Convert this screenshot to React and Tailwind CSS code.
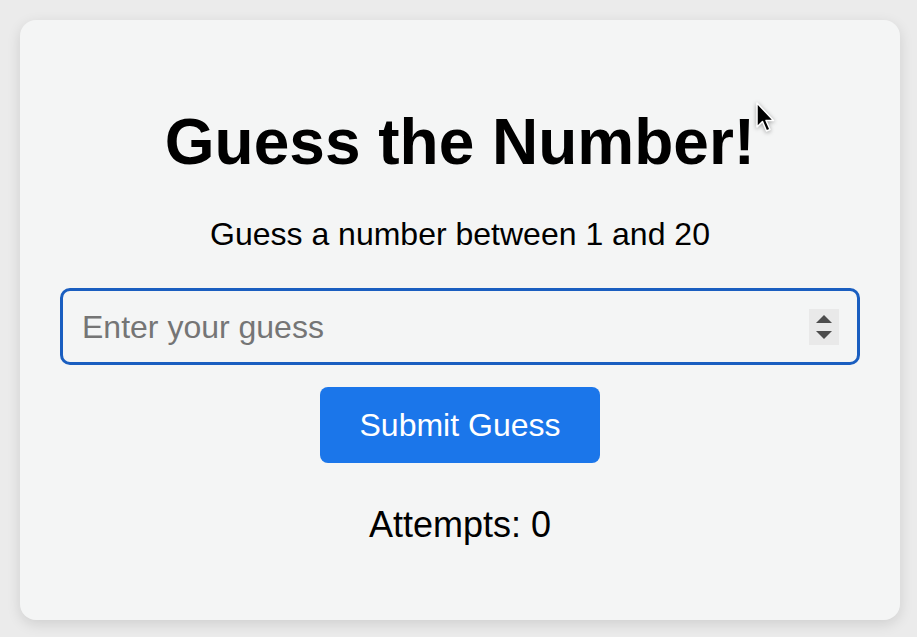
import React, { useState } from 'react';

function Spinner() {
  return (
    <div className="w-[30px] h-[36px] bg-[#e9e9e9] flex flex-col items-center justify-center gap-[8px]">
      <div className="w-0 h-0 border-l-[8px] border-r-[8px] border-b-[8px] border-l-transparent border-r-transparent border-b-[#4d4d4d]" />
      <div className="w-0 h-0 border-l-[8px] border-r-[8px] border-t-[8px] border-l-transparent border-r-transparent border-t-[#4d4d4d]" />
    </div>
  );
}

function Cursor() {
  return (
    <svg
      className="absolute left-[755px] top-[101px] drop-shadow-[0_1px_2px_rgba(0,0,0,0.35)]"
      width="22"
      height="34"
      viewBox="0 0 22 34"
    >
      <path
        d="M2 2 L2 26 L7.5 20.5 L11.5 30 L15 28.5 L11 19.5 L18.5 19.5 Z"
        fill="#000"
        stroke="#fff"
        strokeWidth="1.5"
        strokeLinejoin="round"
      />
    </svg>
  );
}

export default function App() {
  const [guess, setGuess] = useState('');
  const [attempts, setAttempts] = useState(0);

  return (
    <div className="relative min-h-screen bg-[#ebebeb] pl-[20px] pt-[20px] font-['Liberation_Sans',Arial,sans-serif] text-black">
      <div className="w-[880px] rounded-[16px] bg-[#f4f5f5] shadow-[0_4px_14px_rgba(0,0,0,0.12)] px-[40px] pt-[85px] pb-[75px] text-center">
        <h1 className="text-[64px] font-bold leading-[74px]">Guess the Number!</h1>
        <p className="mt-[37px] text-[32px] leading-[37px]">Guess a number between 1 and 20</p>

        <div className="mt-[35px] h-[77px] w-full rounded-[10px] border-[3px] border-[#1a5ec0] flex items-center pl-[19px] pr-[18px]">
          <input
            type="text"
            value={guess}
            onChange={(e) => setGuess(e.target.value)}
            placeholder="Enter your guess"
            className="flex-1 bg-transparent outline-none text-[32px] text-black placeholder:text-[#757575]"
          />
          <Spinner />
        </div>

        <button
          onClick={() => setAttempts(attempts + 1)}
          className="mt-[22px] mx-auto block w-[280px] h-[76px] rounded-[8px] bg-[#1b76ea] text-white text-[32px]"
        >
          Submit Guess
        </button>

        <p className="mt-[41px] text-[36px] leading-[41px]">Attempts: {attempts}</p>
      </div>
      <Cursor />
    </div>
  );
}
